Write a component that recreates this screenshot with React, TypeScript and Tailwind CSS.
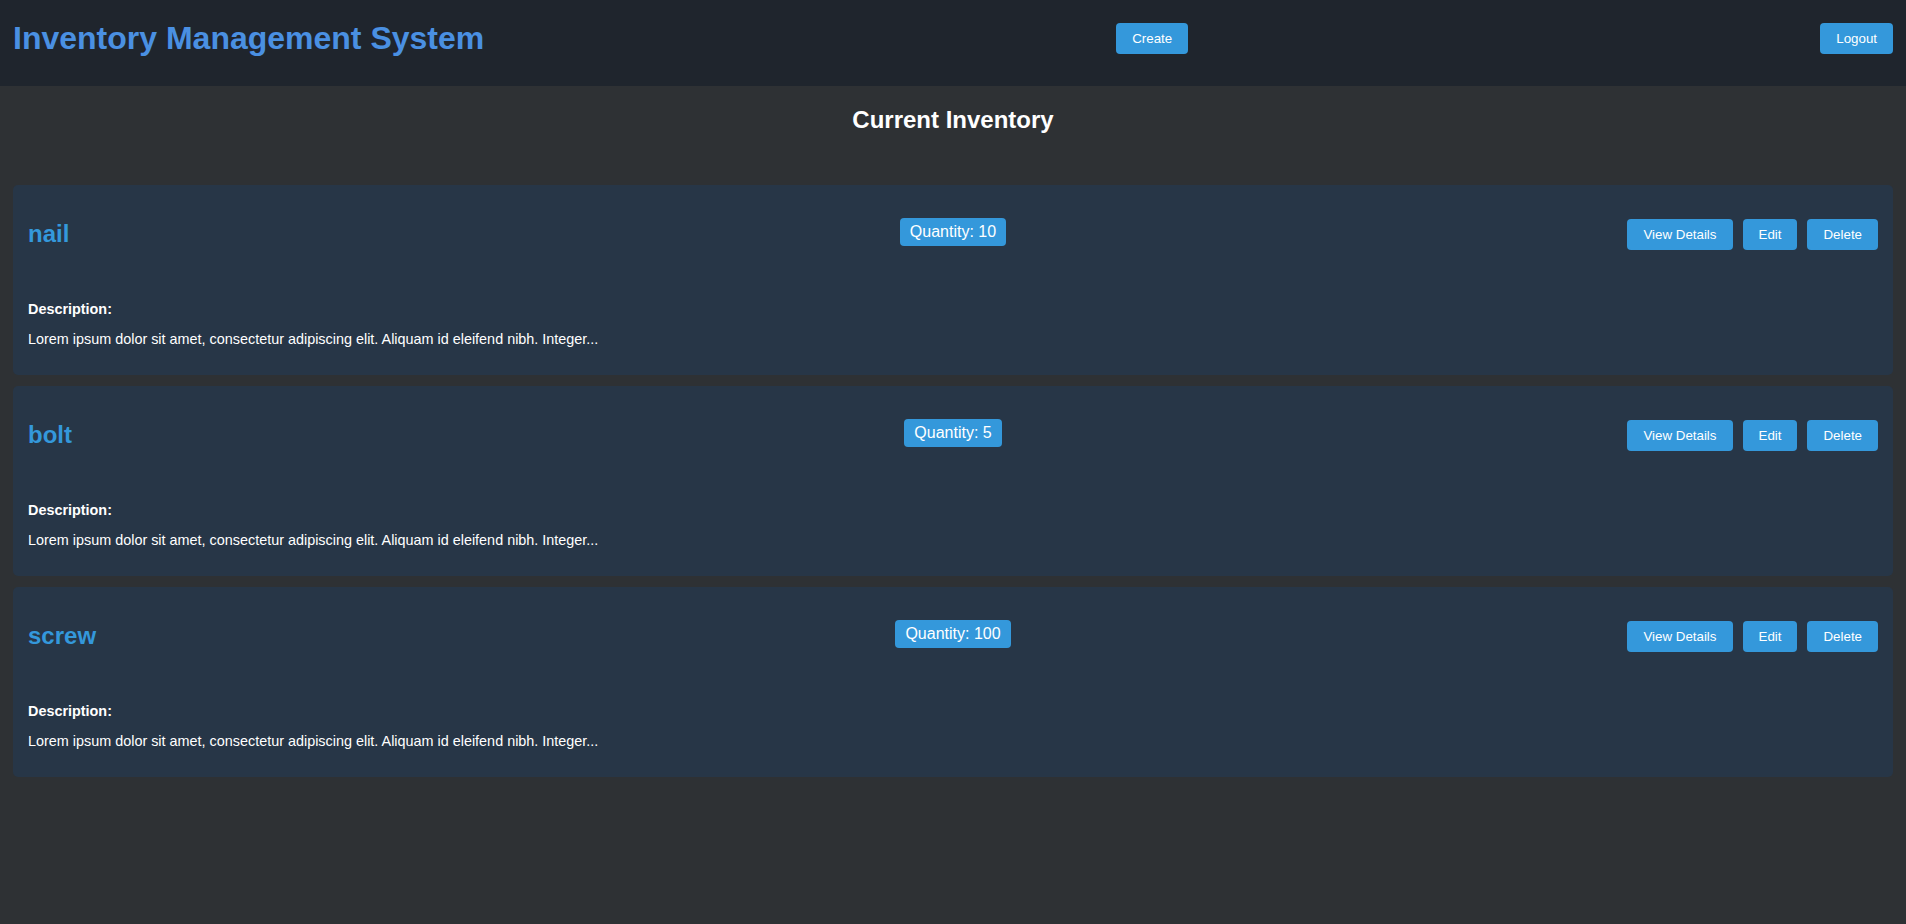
import React from 'react';

interface Item {
  id: number;
  name: string;
  quantity: number;
  description: string;
}

const items: Item[] = [
  { id: 1, name: 'nail', quantity: 10, description: 'Lorem ipsum dolor sit amet, consectetur adipiscing elit. Aliquam id eleifend nibh. Integer...' },
  { id: 2, name: 'bolt', quantity: 5, description: 'Lorem ipsum dolor sit amet, consectetur adipiscing elit. Aliquam id eleifend nibh. Integer...' },
  { id: 3, name: 'screw', quantity: 100, description: 'Lorem ipsum dolor sit amet, consectetur adipiscing elit. Aliquam id eleifend nibh. Integer...' },
];

const btn = 'bg-[#3498db] text-white text-[13.333px] leading-[15px] px-4 py-2 rounded-[4px] hover:bg-[#2980b9]';

function ItemCard({ item }: { item: Item }) {
  return (
    <div className="bg-[#273647] rounded-[5px] p-[15px]">
      <div className="grid grid-cols-[1fr_auto_1fr] items-center h-[69px]">
        <h2 className="text-[24px] leading-[28px] font-bold text-[#3498db] mb-[2px]">{item.name}</h2>
        <span className="bg-[#3498db] text-white text-[16px] leading-[18px] px-[10px] py-[5px] rounded-[4px] mb-[5px]">
          Quantity: {item.quantity}
        </span>
        <div className="flex justify-end gap-[10px]">
          <button className={btn}>View Details</button>
          <button className={btn}>Edit</button>
          <button className={btn}>Delete</button>
        </div>
      </div>

      {/* Description */}
      <div className="mt-[32px] mb-[12.5px] text-white text-[14.4px] leading-[16.5px]">
        <p className="font-bold">Description:</p>
        <p className="mt-[13.5px]">{item.description}</p>
      </div>
    </div>
  );
}

export default function App() {
  return (
    <div className="min-h-[924px] bg-[#2e3134] font-['Liberation_Sans',Arial,sans-serif]">
      <header className="flex items-center justify-between h-[86px] pb-[9px] px-[13px] bg-[#1f252d]">
        <h1 className="text-[32px] leading-[37px] font-bold text-[#4a90e2]">Inventory Management System</h1>
        <button className={btn}>Create</button>
        <button className={btn}>Logout</button>
      </header>

      <main className="px-[13px] pt-[20px] pb-8">
        <h2 className="text-center text-white text-[24px] leading-[28px] font-bold mb-[51px]">Current Inventory</h2>
        <div className="flex flex-col gap-[11px]">
          {items.map((item) => (
            <ItemCard key={item.id} item={item} />
          ))}
        </div>
      </main>
    </div>
  );
}
